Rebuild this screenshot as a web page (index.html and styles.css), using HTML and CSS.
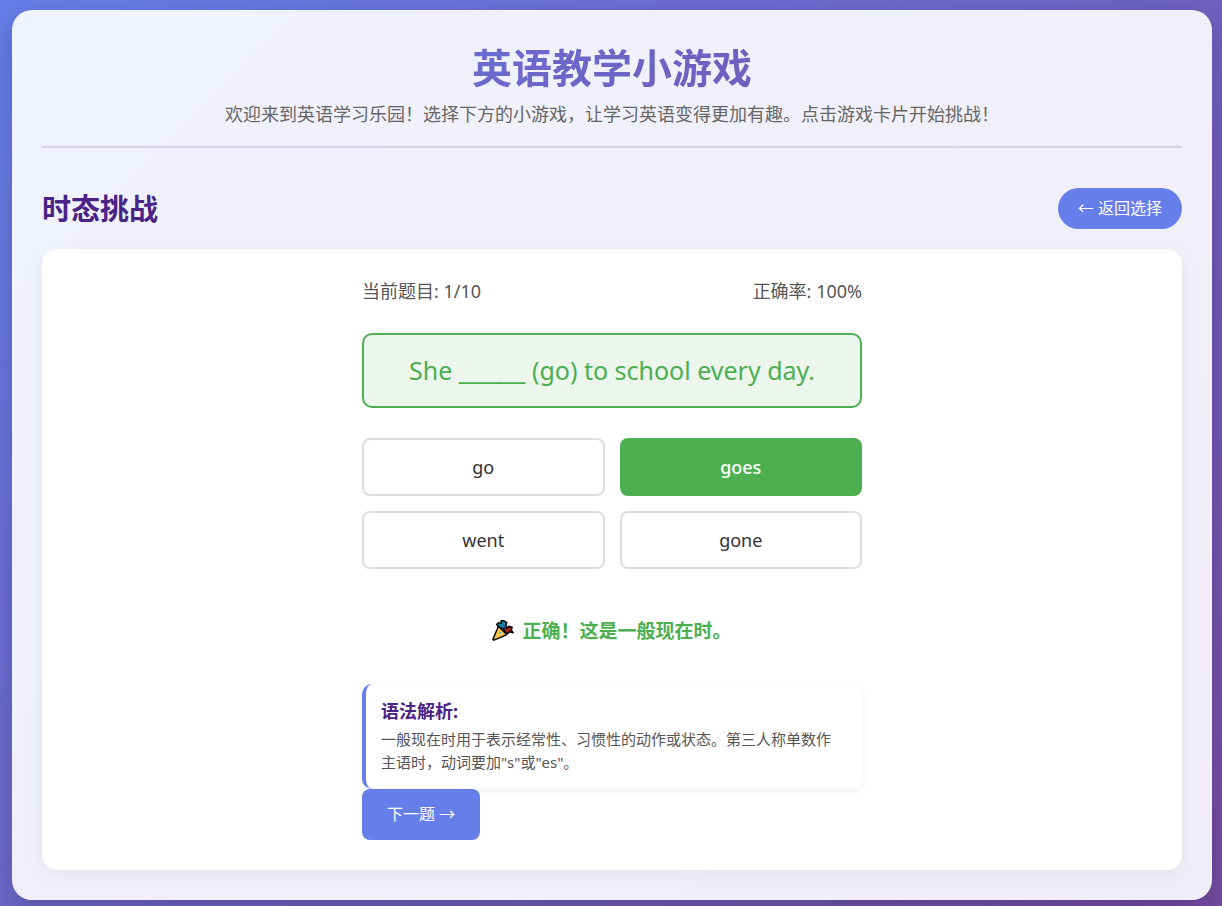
FILE: index.html
```html
<!DOCTYPE html>
<html lang="zh-CN">

<head>
    <meta charset="utf-8">
    <title>英语教学小游戏</title>
    <meta name="viewport" content="width=device-width, initial-scale=1">
    <link rel="stylesheet" href="styles.css">
</head>

<body>
    <div class="container">
        <header>
            <h1>英语教学小游戏</h1>
            <p class="subtitle">欢迎来到英语学习乐园！选择下方的小游戏，让学习英语变得更加有趣。点击游戏卡片开始挑战！</p>
        </header>

        <main>
            <div class="game-header">
                <h2>时态挑战</h2>
                <button type="button" class="back-btn">← 返回选择</button>
            </div>

            <div class="game-content">
                <div class="tense-game">
                    <div class="stats">
                        <div>当前题目: <span id="current">1</span>/10</div>
                        <div>正确率: <span id="accuracy">100</span>%</div>
                    </div>

                    <div class="question">She ______ (go) to school every day.</div>

                    <div class="options">
                        <button type="button" class="option">go</button>
                        <button type="button" class="option correct">goes</button>
                        <button type="button" class="option">went</button>
                        <button type="button" class="option">gone</button>
                    </div>

                    <div class="feedback">
                        <svg class="party" viewBox="0 0 24 24" aria-hidden="true">
                            <g stroke="#000" stroke-width="1.6" stroke-linejoin="round">
                                <path fill="#1387a5" d="M8 9 L5 6 L7 4 L10 5 L10 2 L13 2 L16 4 L15 7 L16 9 L13 11 Z" />
                                <path fill="#a82018" d="M13 12 L14 9 L17 10 L18 8 L22 9 L21 12 L23 15 L19 14 L17 16 L14 14 Z" />
                                <path fill="#ffc64b" d="M7 8 L16 17 Q10 20 2 23 Q1 23 1 22 Z" />
                            </g>
                            <path fill="#4b3fa0" d="M12 9 L15 8 L15 11 Z" />
                            <path fill="#3db5e6" d="M8 14h2v2H8z" />
                        </svg>
                        <span>正确！这是一般现在时。</span>
                    </div>

                    <div class="explanation">
                        <h4>语法解析:</h4>
                        <p>一般现在时用于表示经常性、习惯性的动作或状态。第三人称单数作主语时，动词要加"s"或"es"。</p>
                    </div>
                    <button type="button" class="next-btn">下一题 →</button>
                </div>
            </div>
        </main>
    </div>
</body>

</html>
```
FILE: styles.css
```css
* {
    margin: 0;
    padding: 0;
    box-sizing: border-box;
    font-family: "Noto Sans", "Noto Sans CJK SC", sans-serif;
}

body {
    background: linear-gradient(135deg, #667eea 0%, #764ba2 100%);
    min-height: 100vh;
    padding: 10px 10px 6px 12px;
    color: #333;
}

.container {
    max-width: 1200px;
    margin: 0 auto;
    padding: 30px;
    background: rgba(255, 255, 255, 0.9);
    border-radius: 20px;
    box-shadow: 0 10px 30px rgba(0, 0, 0, 0.2);
}

header {
    text-align: center;
    padding-bottom: 20px;
    margin-bottom: 40px;
    border-bottom: 2px solid rgba(118, 75, 162, 0.2);
}

h1 {
    font-size: 40px;
    line-height: 56px;
    margin-bottom: 6px;
    background: linear-gradient(135deg, #667eea, #764ba2);
    -webkit-background-clip: text;
    background-clip: text;
    color: transparent;
}

.subtitle {
    font-size: 18px;
    line-height: 24px;
    color: #666;
}

.game-header {
    display: flex;
    justify-content: space-between;
    align-items: center;
    margin-bottom: 20px;
}

h2 {
    font-size: 29px;
    line-height: 40px;
    color: #4a2385;
}

button {
    border: none;
    cursor: pointer;
}

.back-btn {
    padding: 8px 20px;
    font-size: 16px;
    line-height: 25px;
    color: white;
    background: #667eea;
    border-radius: 25px;
}

.game-content {
    padding: 30px;
    background: white;
    border-radius: 15px;
    box-shadow: 0 5px 20px rgba(0, 0, 0, 0.05);
}

.tense-game {
    max-width: 500px;
    margin: 0 auto;
}

.stats {
    display: flex;
    justify-content: space-between;
    margin-bottom: 30px;
    font-size: 18px;
    line-height: 24px;
    color: #555;
}

.question {
    padding: 18px;
    margin-bottom: 30px;
    font-size: 25px;
    line-height: 35px;
    text-align: center;
    color: #4caf50;
    background: #ecf6ed;
    border: 2px solid #4caf50;
    border-radius: 10px;
}

.options {
    display: grid;
    grid-template-columns: 1fr 1fr;
    gap: 15px;
    margin-bottom: 30px;
}

.option {
    padding: 15px;
    font-size: 18px;
    line-height: 24px;
    color: #333;
    background: white;
    border: 2px solid #ddd;
    border-radius: 8px;
}

.option.correct {
    color: white;
    background: #4caf50;
    border-color: #4caf50;
    font-weight: 500;
}

.feedback {
    display: flex;
    justify-content: center;
    align-items: center;
    gap: 8px;
    min-height: 62px;
    margin-bottom: 23px;
    font-size: 19px;
    font-weight: bold;
    color: #4caf50;
}

.party {
    width: 22px;
    height: 22px;
}

.explanation {
    padding: 15px 20px 15px 15px;
    border-left: 4px solid #667eea;
    border-radius: 10px;
    background: white;
    box-shadow: 0 3px 10px rgba(0, 0, 0, 0.05);
}

.explanation h4 {
    margin-bottom: 5px;
    font-size: 18px;
    line-height: 24px;
    color: #4a2385;
}

.explanation p {
    font-size: 15px;
    line-height: 23px;
    color: #555;
}

.next-btn {
    padding: 13px 25px;
    font-size: 16px;
    line-height: 25px;
    color: white;
    background: #667eea;
    border-radius: 8px;
}
```
